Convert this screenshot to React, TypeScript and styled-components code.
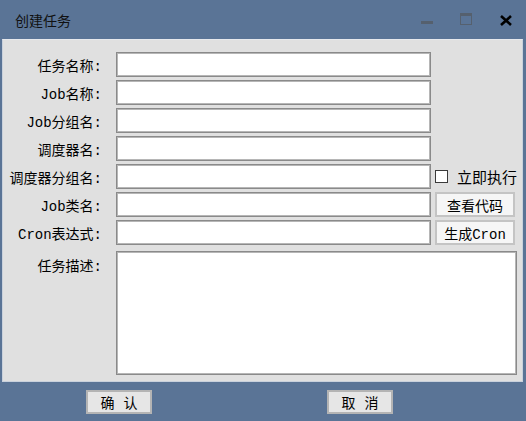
import { Fragment } from "react";
import styled, { createGlobalStyle } from "styled-components";

const Global = createGlobalStyle`
	html, body {
		margin: 0;
		padding: 0;
		background: #5a7496;
	}
	body {
		font-family: "Liberation Mono", "Noto Sans CJK SC", monospace;
		font-size: 14px;
		color: #000;
	}
`;

const Window = styled.div`
	width: 526px;
	height: 421px;
	background: #5a7496;
	display: flex;
	flex-direction: column;
`;

const TitleBar = styled.div`
	height: 39px;
	display: flex;
	align-items: center;
	padding: 0 13px 0 15px;
`;

const Title = styled.div`
	flex: 1;
	font-family: "Noto Sans CJK SC", sans-serif;
	font-size: 14px;
	color: #111;
	padding-top: 1px;
`;

const Controls = styled.div`
	display: flex;
	align-items: center;
	gap: 26px;
`;

const Panel = styled.div`
	margin: 0 3px 0 2px;
	height: 343px;
	box-sizing: border-box;
	background: #e0e0e0;
	border: 1px solid #c9d1dc;
	border-top-color: #e6e8ec;
	padding: 12px 4px 0 1px;
	display: grid;
	grid-template-columns: 112px 315px 86px;
	grid-auto-rows: 25px;
	row-gap: 3px;
`;

const Label = styled.label<{ $top?: boolean }>`
	display: flex;
	justify-content: flex-end;
	align-items: ${(p) => (p.$top ? "flex-start" : "center")};
	padding-top: ${(p) => (p.$top ? "7px" : "0")};
	padding-right: 14px;
	white-space: nowrap;
	font-size: 14px;
`;

const Input = styled.input`
	margin: 0;
	box-sizing: border-box;
	width: 315px;
	height: 25px;
	background: #fff;
	border: 1px solid #8a8a8a;
	box-shadow: inset 0 0 0 1px #b6b6b6;
	outline: none;
`;

const Side = styled.div`
	display: flex;
	align-items: center;
	padding-left: 4px;
`;

const SideButton = styled.button`
	width: 80px;
	height: 25px;
	margin: 0;
	padding: 0;
	box-sizing: border-box;
	background: #f6f6f6;
	border: 2px solid #c4c4c4;
	font-family: "Liberation Mono", "Noto Sans CJK SC", monospace;
	font-size: 14px;
	color: #000;
`;

const Check = styled.span`
	flex: none;
	width: 13px;
	height: 13px;
	box-sizing: border-box;
	border: 1px solid #3a3a3a;
	background: #fff;
	margin-right: 9px;
`;

const CheckText = styled.span`
	font-family: "Noto Sans CJK SC", sans-serif;
	font-size: 15px;
	white-space: nowrap;
`;

const TextArea = styled.textarea`
	grid-column: 2 / 4;
	grid-row: span 4;
	margin: 3px 0 0 0;
	height: 124px;
	box-sizing: border-box;
	width: 401px;
	resize: none;
	background: #fff;
	border: 1px solid #8a8a8a;
	box-shadow: inset 0 0 0 1px #b6b6b6;
	outline: none;
`;

const Footer = styled.div`
	flex: 1;
	display: flex;
	align-items: center;
	padding-left: 86px;
	padding-top: 1px;
	gap: 175px;
`;

const FootButton = styled.button`
	width: 66px;
	height: 24px;
	margin: 0;
	padding: 0;
	box-sizing: border-box;
	background: #e6e6e6;
	border: 2px solid #b4b4b4;
	font-family: "Noto Sans CJK SC", sans-serif;
	font-size: 14px;
	word-spacing: 6px;
	color: #000;
`;

const fields = ["任务名称:", "Job名称:", "Job分组名:", "调度器名:", "调度器分组名:", "Job类名:", "Cron表达式:"];

function App() {
	return (
		<>
			<Global />
			<Window>
				<TitleBar>
					<Title>创建任务</Title>
					<Controls>
						<svg width="13" height="13" viewBox="0 0 13 13">
							<rect x="0" y="8" width="12" height="3" fill="#55606e" />
						</svg>
						<svg width="13" height="13" viewBox="0 0 13 13">
							<rect x="0.5" y="0.5" width="11" height="11" fill="none" stroke="#55606e" />
							<rect x="0" y="0" width="12" height="3" fill="#55606e" />
						</svg>
						<svg width="14" height="14" viewBox="0 0 14 14">
							<path d="M2 3 L12 12 M12 3 L2 12" stroke="#000" strokeWidth="2.6" />
						</svg>
					</Controls>
				</TitleBar>
				<Panel>
					{fields.map((f, i) => (
						<Fragment key={i}>
							<Label>{f}</Label>
							<Input />
							<Side>
								{i === 4 && (
									<>
										<Check />
										<CheckText>立即执行</CheckText>
									</>
								)}
								{i === 5 && <SideButton>查看代码</SideButton>}
								{i === 6 && <SideButton>生成Cron</SideButton>}
							</Side>
						</Fragment>
					))}
					<Label $top>任务描述:</Label>
					<TextArea />
				</Panel>
				<Footer>
					<FootButton>确 认</FootButton>
					<FootButton>取 消</FootButton>
				</Footer>
			</Window>
		</>
	);
}

export default App;
